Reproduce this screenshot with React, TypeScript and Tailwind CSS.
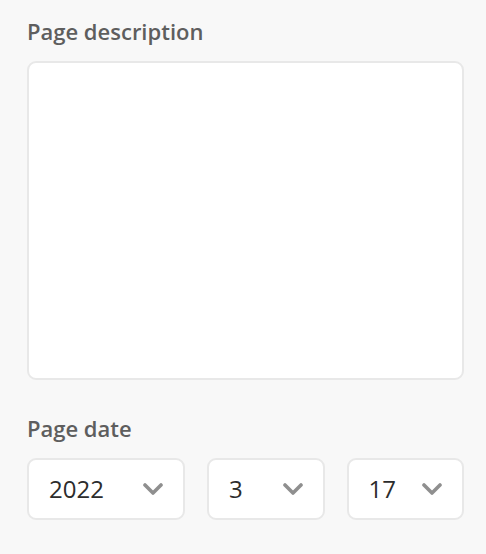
import React from 'react';

const Chevron: React.FC = () => (
  <svg width="20" height="12" viewBox="0 0 20 12" fill="none" className="shrink-0">
    <path d="M2 2 L10 10 L18 2" stroke="#8f8f8f" strokeWidth="3.6" strokeLinecap="round" strokeLinejoin="round" />
  </svg>
);

interface DateSelectProps {
  value: string;
  className?: string;
}

const DateSelect: React.FC<DateSelectProps> = ({ value, className }) => (
  <div
    className={`h-[62px] flex items-center justify-between pl-[20px] pr-[20px] bg-white border-2 border-[#e8e8e8] rounded-[9px] ${className ?? ''}`}
  >
    <span className="text-[24px] leading-none text-[#2c2c2c]">{value}</span>
    <Chevron />
  </div>
);

export default function App() {
  return (
    <div
      className="w-full h-[554px] bg-[#f8f8f8] pl-[27px] pr-[22px] pt-[17px]"
      style={{ fontFamily: '"Open Sans", "Noto Sans", sans-serif' }}
    >
      {/* Description */}
      <label className="block text-[22px] leading-[28px] font-semibold text-[#5e5e5e]">Page description</label>
      <div className="mt-[16px] h-[319px] bg-white border-2 border-[#e8e8e8] rounded-[9px]" />

      {/* Date */}
      <label className="block mt-[34px] text-[22px] leading-[28px] font-semibold text-[#5e5e5e]">Page date</label>
      <div className="mt-[16px] flex gap-[22px]">
        <DateSelect value="2022" className="w-[158px]" />
        <DateSelect value="3" className="flex-1" />
        <DateSelect value="17" className="flex-1" />
      </div>
    </div>
  );
}
